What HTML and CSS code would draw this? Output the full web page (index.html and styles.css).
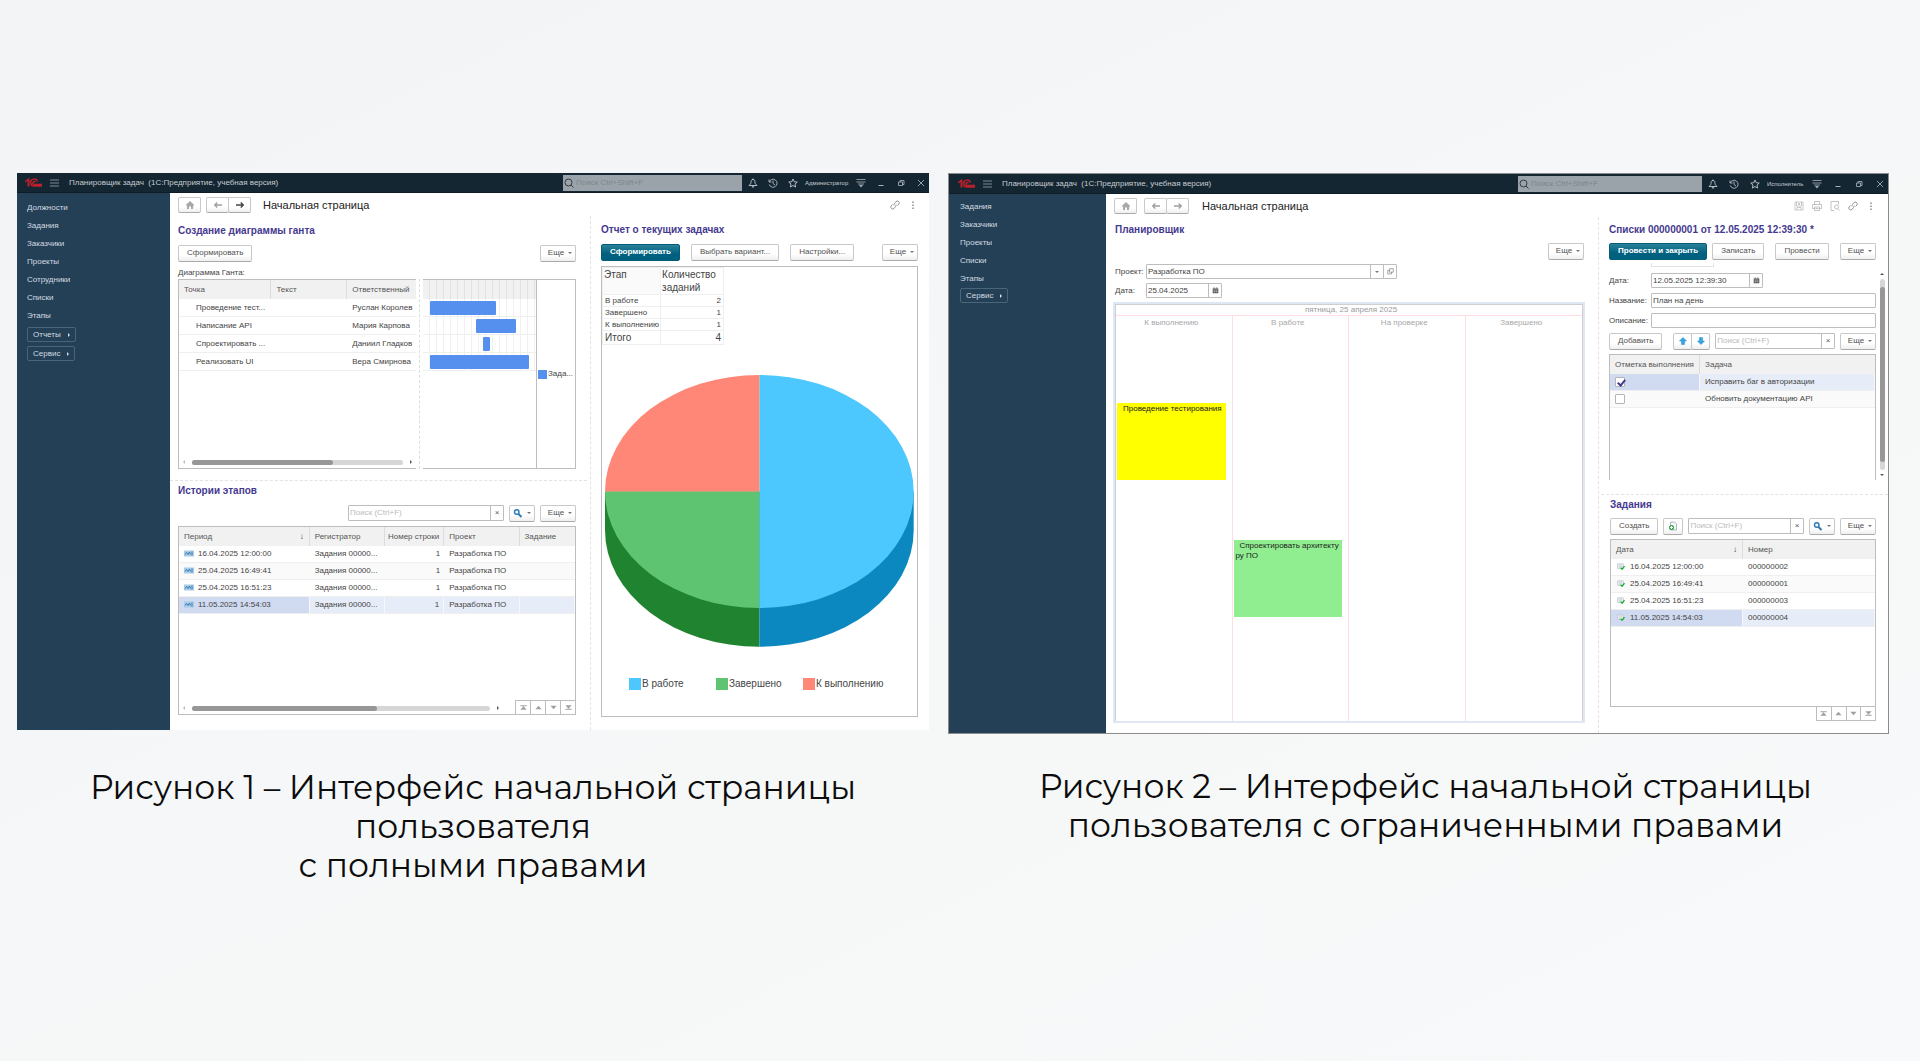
FILE: index.html
```html
<!DOCTYPE html>
<html lang="ru">
<head>
<meta charset="utf-8">
<meta name="viewport" content="width=device-width, initial-scale=1">
<title>Интерфейс начальной страницы</title>
<link rel="stylesheet" href="styles.css">
</head>
<body>
<svg class="sprite" aria-hidden="true">
  <symbol id="logo" viewBox="0 0 34 18"><path d="M0 6l6-5h3v16H5V6L0 9z" fill="#bb202b"/><path d="M25 7a7 7 0 1 0-6 9h15M21 8a3 3 0 1 0-2 5h15" fill="none" stroke="#bb202b" stroke-width="3"/></symbol>
  <symbol id="burger" viewBox="0 0 18 16"><path d="M0 2h18M0 8h18M0 14h18" stroke="#7f8a92" stroke-width="2"/></symbol>
  <symbol id="lens" viewBox="0 0 20 20"><path d="M14 14l5 5M16 9A7 7 0 1 1 2 9a7 7 0 0 1 14 0z" fill="none" stroke="#333c43" stroke-width="2"/></symbol>
  <symbol id="bell" viewBox="0 0 20 20"><path d="M10 1v3M10 3C6 3 6 7 6 9s-1 3-4 6h16c-3-3-4-4-4-6s0-6-4-6zM8 16l2 3 2-3" fill="none" stroke="#c3c9cd" stroke-width="1.800"/></symbol>
  <symbol id="history" viewBox="0 0 20 20"><path d="M2 3v5h5M2.500 8a8 8 0 1 1 0 5M10 5v6l4 3" fill="none" stroke="#b3babf" stroke-width="1.800"/></symbol>
  <symbol id="star" viewBox="0 0 20 20"><path d="M10 2l2.500 5.500 6 .600-4.500 4 1.300 6L10 15l-5.300 3.100 1.300-6-4.500-4 6-.600z" fill="none" stroke="#c3c9cd" stroke-width="1.800"/></symbol>
  <symbol id="service" viewBox="0 0 20 20"><path d="M1 3h18M1 8h18M4 12h12" stroke="#a9b1b7" stroke-width="1.600"/><path d="M6 14h8l-4 5z" fill="#a9b1b7"/></symbol>
  <symbol id="minimize" viewBox="0 0 20 20"><path d="M5 15h10" stroke="#a9b1b7" stroke-width="2"/></symbol>
  <symbol id="restore" viewBox="0 0 20 20"><path d="M5 8h8v7H5zM8 8V5h8v8h-3" fill="none" stroke="#b3babf" stroke-width="1.600"/></symbol>
  <symbol id="close" viewBox="0 0 20 20"><path d="M4 4l12 12M16 4L4 16" stroke="#b3babf" stroke-width="1.600"/></symbol>
  <symbol id="home" viewBox="0 0 20 20"><path d="M10 2l8.500 8-2 1.500L16 18h-4v-5H8v5H4v-6.500L1.500 10z" fill="#a8a8a8"/></symbol>
  <symbol id="left" viewBox="0 0 20 20"><path d="M18 10H4M8.500 5l-5 5 5 5" fill="none" stroke="currentColor" stroke-width="2.800"/></symbol>
  <symbol id="right" viewBox="0 0 20 20"><path d="M2 10h14M11.500 5l5 5-5 5" fill="none" stroke="currentColor" stroke-width="2.800"/></symbol>
  <symbol id="link" viewBox="0 0 20 20"><path d="M8 11a4 4 0 0 1 1-4l3-4a4 4 0 0 1 6 5l-3 3M12 9a4 4 0 0 1-1 4l-3 4a4 4 0 0 1-6-5l3-3" fill="none" stroke="#777" stroke-width="1.600"/></symbol>
  <symbol id="dots" viewBox="0 0 20 20"><path d="M9 3h2v3H9zM9 9h2v3H9zM9 15h2v3H9z" fill="#555"/></symbol>
  <symbol id="save" viewBox="0 0 20 20"><path d="M2 2h16v16H2zM5 2v8h10V2M6 18v-5h8v5M8 5h4M8 7h4" fill="none" stroke="#b4b4b4" stroke-width="1.400"/></symbol>
  <symbol id="print" viewBox="0 0 20 20"><path d="M5 7V1h10v6M5 15H1V7h18v8h-4M5 12h10v7H5zM7 15h6" fill="none" stroke="#b4b4b4" stroke-width="1.600"/></symbol>
  <symbol id="preview" viewBox="0 0 20 20"><path d="M8 19H2V1h15v6M17 12a4 4 0 1 1-8 0 4 4 0 0 1 8 0zM15 15l4 4" fill="none" stroke="#b4b4b4" stroke-width="1.600"/></symbol>
  <symbol id="find" viewBox="0 0 20 20"><path d="M12 8A4.500 4.500 0 1 1 3 8a4.500 4.500 0 0 1 9 0z" fill="none" stroke="#2a7ab5" stroke-width="2.800"/><path d="M11 12l6 6" stroke="#2a7ab5" stroke-width="4"/></symbol>
  <symbol id="record" viewBox="0 0 20 14"><path d="M0 1h20v12H0z" fill="#a9cbe6"/><path d="M2 9l3-4 3 4 3-5 2 5M16 3v8" fill="none" stroke="#2d76ad" stroke-width="1.800"/></symbol>
  <symbol id="posted" viewBox="0 0 20 18"><path d="M1 2h15v12H1zM4 5h9M4 8h9M4 11h5" fill="#f3f6f8" stroke="#a9b5be" stroke-width="1.400"/><path d="M9 12l4 4 6-8" fill="none" stroke="#21ad35" stroke-width="3.500"/></symbol>
  <symbol id="copy" viewBox="0 0 20 20"><path d="M5 2h8l4 4v12H5z" fill="#f5f8fa" stroke="#8fa3b3" stroke-width="1.500"/><path d="M12 13a5 5 0 1 1-10 0 5 5 0 0 1 10 0z" fill="#2fa541"/><path d="M4 13h6M7 10v6" stroke="#fff" stroke-width="2"/></symbol>
  <symbol id="calendar" viewBox="0 0 20 20"><path d="M2 4h16v14H2zM5 1h2v3H5zM13 1h2v3h-2z" fill="#555"/><path d="M3 8.500h14M3 12.500h14M7 7v10M12.500 7v10" stroke="#ddd"/></symbol>
  <symbol id="open" viewBox="0 0 20 20"><path d="M7 2h11v10H7zM7 7H2v10h11v-5" fill="none" stroke="#777" stroke-width="1.800"/></symbol>
  <symbol id="up" viewBox="0 0 20 20"><path d="M10 1l9 9h-5v9H6v-9H1z" fill="#35a5e5" stroke="#1c7cb8"/></symbol>
  <symbol id="down" viewBox="0 0 20 20"><path d="M10 19l9-9h-5V1H6v9H1z" fill="#35a5e5" stroke="#1c7cb8"/></symbol>
  <symbol id="first" viewBox="0 0 20 20"><path d="M3 5h14v2H3zM3 15l7-8 7 8z" fill="#a0a0a0"/></symbol>
  <symbol id="prev" viewBox="0 0 20 20"><path d="M3 14l7-8 7 8z" fill="#a0a0a0"/></symbol>
  <symbol id="next" viewBox="0 0 20 20"><path d="M3 6l7 8 7-8z" fill="#a0a0a0"/></symbol>
  <symbol id="last" viewBox="0 0 20 20"><path d="M3 13h14v2H3zM3 5l7 8 7-8z" fill="#a0a0a0"/></symbol>
</svg>

<main class="slide">
  <figure class="shot">
    <div class="app">
      <header class="titlebar">
        <svg class="logo"><use href="#logo"/></svg>
        <svg class="burger"><use href="#burger"/></svg>
        <span class="app-name">Планировщик задач&nbsp; (1С:Предприятие, учебная версия)</span>
        <label class="global-search"><svg class="icon"><use href="#lens"/></svg><input type="search" placeholder="Поиск Ctrl+Shift+F" aria-label="Поиск"></label>
        <div class="system">
          <svg class="icon"><use href="#bell"/></svg><svg class="icon"><use href="#history"/></svg><svg class="icon"><use href="#star"/></svg>
          <span class="user">Администратор</span>
          <svg class="icon"><use href="#service"/></svg><svg class="icon"><use href="#minimize"/></svg><svg class="icon"><use href="#restore"/></svg><svg class="icon"><use href="#close"/></svg>
        </div>
      </header>
      <div class="app-body">
        <nav class="sidebar">
          <a href="#">Должности</a><a href="#">Задания</a><a href="#">Заказчики</a><a href="#">Проекты</a><a href="#">Сотрудники</a><a href="#">Списки</a><a href="#">Этапы</a>
          <button class="group">Отчеты</button><button class="group">Сервис</button>
        </nav>
        <section class="workspace">
          <div class="page-bar">
            <button class="btn home" aria-label="Домой"><svg class="icon"><use href="#home"/></svg></button>
            <div class="history"><button class="btn" aria-label="Назад"><svg class="icon"><use href="#left"/></svg></button><button class="btn active" aria-label="Вперед"><svg class="icon"><use href="#right"/></svg></button></div>
            <h1>Начальная страница</h1>
            <div class="page-tools"><svg class="icon"><use href="#link"/></svg><svg class="icon"><use href="#dots"/></svg></div>
          </div>
          <div class="panes">
            <div class="pane-main split">
              <section class="gantt-section">
                <h2>Создание диаграммы ганта</h2>
                <div class="toolbar"><button class="btn">Сформировать</button><button class="btn more">Еще</button></div>
                <p class="caption-label">Диаграмма Ганта:</p>
                <div class="gantt">
                  <div class="gantt-list">
                    <table class="grid">
                      <colgroup><col class="w-39"><col class="w-32"><col></colgroup>
                      <thead><tr><th>Точка</th><th>Текст</th><th>Ответственный</th></tr></thead>
                      <tbody>
                        <tr><td class="indent">Проведение тест...</td><td></td><td>Руслан Королев</td></tr>
                        <tr><td class="indent">Написание API</td><td></td><td>Мария Карпова</td></tr>
                        <tr><td class="indent">Спроектировать ...</td><td></td><td>Даниил Гладков</td></tr>
                        <tr><td class="indent">Реализовать UI</td><td></td><td>Вера Смирнова</td></tr>
                      </tbody>
                    </table>
                    <div class="scroll"><div class="track"><div class="thumb" style="width:67%"></div></div></div>
                  </div>
                  <div class="gantt-divider"></div>
                  <div class="gantt-chart">
                    <div class="timeline">
                      <div class="scale"></div>
                      <div class="lane"><div class="bar" style="margin-left:6%;width:59%"></div></div>
                      <div class="lane"><div class="bar" style="margin-left:47%;width:35%"></div></div>
                      <div class="lane"><div class="bar" style="margin-left:53%;width:6%"></div></div>
                      <div class="lane"><div class="bar" style="margin-left:6%;width:88%"></div></div>
                    </div>
                    <div class="gantt-legend"><i class="swatch gantt-blue"></i>Зада...</div>
                  </div>
                </div>
              </section>
              <section class="stages">
                <h2>Истории этапов</h2>
                <div class="toolbar end">
                  <div class="search"><input type="search" placeholder="Поиск (Ctrl+F)" aria-label="Поиск"><button aria-label="Очистить">×</button></div>
                  <button class="btn find" aria-label="Найти"><svg class="icon"><use href="#find"/></svg></button>
                  <button class="btn more">Еще</button>
                </div>
                <div class="list history-list">
                  <table class="grid dense">
                    <colgroup><col class="w-33"><col class="w-19"><col class="w-15"><col class="w-19"><col></colgroup>
                    <thead><tr><th class="sorted">Период</th><th>Регистратор</th><th class="num">Номер строки</th><th>Проект</th><th>Задание</th></tr></thead>
                    <tbody>
                      <tr><td><svg class="icon row-icon"><use href="#record"/></svg>16.04.2025 12:00:00</td><td>Задания 00000...</td><td class="num">1</td><td>Разработка ПО</td><td></td></tr>
                      <tr><td><svg class="icon row-icon"><use href="#record"/></svg>25.04.2025 16:49:41</td><td>Задания 00000...</td><td class="num">1</td><td>Разработка ПО</td><td></td></tr>
                      <tr><td><svg class="icon row-icon"><use href="#record"/></svg>25.04.2025 16:51:23</td><td>Задания 00000...</td><td class="num">1</td><td>Разработка ПО</td><td></td></tr>
                      <tr class="selected"><td><svg class="icon row-icon"><use href="#record"/></svg>11.05.2025 14:54:03</td><td>Задания 00000...</td><td class="num">1</td><td>Разработка ПО</td><td></td></tr>
                    </tbody>
                  </table>
                  <div class="list-foot">
                    <div class="scroll"><div class="track"><div class="thumb" style="width:62%"></div></div></div>
                    <div class="pager"><button aria-label="В начало"><svg class="icon"><use href="#first"/></svg></button><button aria-label="Вверх"><svg class="icon"><use href="#prev"/></svg></button><button aria-label="Вниз"><svg class="icon"><use href="#next"/></svg></button><button aria-label="В конец"><svg class="icon"><use href="#last"/></svg></button></div>
                  </div>
                </div>
              </section>
            </div>
            <section class="pane-side report">
              <h2>Отчет о текущих задачах</h2>
              <div class="toolbar loose"><button class="btn primary">Сформировать</button><button class="btn">Выбрать вариант...</button><button class="btn">Настройки...</button><button class="btn more">Еще</button></div>
              <div class="report-box">
                <table class="summary">
                  <thead><tr><th>Этап</th><th>Количество заданий</th></tr></thead>
                  <tbody><tr><td>В работе</td><td>2</td></tr><tr><td>Завершено</td><td>1</td></tr><tr><td>К выполнению</td><td>1</td></tr></tbody>
                  <tfoot><tr><td>Итого</td><td>4</td></tr></tfoot>
                </table>
                <svg class="pie" viewBox="0 0 310 274" role="img" aria-label="Количество заданий по этапам">
                  <path d="M0 117v39a155 117 0 0 0 155 117V117z" fill="#20832f"/>
                  <path d="M310 117v39a155 117 0 0 1-155 117V117z" fill="#0c88c0"/>
                  <path d="M155 117V0a155 117 0 0 1 0 234z" fill="#4dc8ff"/>
                  <path d="M155 117v117A155 117 0 0 1 0 117z" fill="#5fc471"/>
                  <path d="M155 117H0A155 117 0 0 1 155 0z" fill="#ff8778"/>
                </svg>
                <ul class="legend"><li><i class="swatch pie-blue"></i>В работе</li><li><i class="swatch pie-green"></i>Завершено</li><li><i class="swatch pie-red"></i>К выполнению</li></ul>
              </div>
            </section>
          </div>
        </section>
      </div>
    </div>
    <figcaption>Рисунок 1 – Интерфейс начальной страницы<br>пользователя<br>с полными правами</figcaption>
  </figure>

  <figure class="shot limited">
    <div class="app framed">
      <header class="titlebar">
        <svg class="logo"><use href="#logo"/></svg>
        <svg class="burger"><use href="#burger"/></svg>
        <span class="app-name">Планировщик задач&nbsp; (1С:Предприятие, учебная версия)</span>
        <label class="global-search"><svg class="icon"><use href="#lens"/></svg><input type="search" placeholder="Поиск Ctrl+Shift+F" aria-label="Поиск"></label>
        <div class="system">
          <svg class="icon"><use href="#bell"/></svg><svg class="icon"><use href="#history"/></svg><svg class="icon"><use href="#star"/></svg>
          <span class="user">Исполнитель</span>
          <svg class="icon"><use href="#service"/></svg><svg class="icon"><use href="#minimize"/></svg><svg class="icon"><use href="#restore"/></svg><svg class="icon"><use href="#close"/></svg>
        </div>
      </header>
      <div class="app-body">
        <nav class="sidebar">
          <a href="#">Задания</a><a href="#">Заказчики</a><a href="#">Проекты</a><a href="#">Списки</a><a href="#">Этапы</a>
          <button class="group">Сервис</button>
        </nav>
        <section class="workspace">
          <div class="page-bar">
            <button class="btn home" aria-label="Домой"><svg class="icon"><use href="#home"/></svg></button>
            <div class="history"><button class="btn" aria-label="Назад"><svg class="icon"><use href="#left"/></svg></button><button class="btn" aria-label="Вперед"><svg class="icon"><use href="#right"/></svg></button></div>
            <h1>Начальная страница</h1>
            <div class="page-tools"><svg class="icon"><use href="#save"/></svg><svg class="icon"><use href="#print"/></svg><svg class="icon"><use href="#preview"/></svg><svg class="icon"><use href="#link"/></svg><svg class="icon"><use href="#dots"/></svg></div>
          </div>
          <div class="panes">
            <section class="pane-main planner">
              <h2>Планировщик</h2>
              <div class="toolbar"><button class="btn more">Еще</button></div>
              <div class="form">
                <label for="project">Проект:</label>
                <div class="field project"><input id="project" value="Разработка ПО"><button aria-label="Выбрать"><i class="caret"></i></button><button aria-label="Открыть"><svg class="icon"><use href="#open"/></svg></button></div>
                <label for="day">Дата:</label>
                <div class="field day"><input id="day" value="25.04.2025"><button aria-label="Календарь"><svg class="icon"><use href="#calendar"/></svg></button></div>
              </div>
              <div class="board">
                <div class="board-inner">
                  <div class="board-date">пятница, 25 апреля 2025</div>
                  <div class="board-columns">
                    <div class="stage"><h3>К выполнению</h3><div class="event yellow">Проведение тестирования</div></div>
                    <div class="stage"><h3>В работе</h3><div class="event green">Спроектировать архитекту<br>ру ПО</div></div>
                    <div class="stage"><h3>На проверке</h3></div>
                    <div class="stage"><h3>Завершено</h3></div>
                  </div>
                </div>
              </div>
            </section>
            <div class="pane-side split">
              <section class="document">
                <h2>Списки 000000001 от 12.05.2025 12:39:30 *</h2>
                <div class="toolbar"><button class="btn primary">Провести и закрыть</button><button class="btn">Записать</button><button class="btn">Провести</button><button class="btn more">Еще</button></div>
                <div class="cut-field"></div>
                <div class="doc-scroll">
                  <div class="doc-body">
                    <div class="form">
                      <label for="when">Дата:</label>
                      <div class="field when"><input id="when" value="12.05.2025 12:39:30"><button aria-label="Календарь"><svg class="icon"><use href="#calendar"/></svg></button></div>
                      <label for="name">Название:</label>
                      <div class="field"><input id="name" value="План на день"></div>
                      <label for="about">Описание:</label>
                      <div class="field"><input id="about"></div>
                    </div>
                    <div class="toolbar">
                      <button class="btn">Добавить</button>
                      <div class="history move"><button class="btn" aria-label="Выше"><svg class="icon"><use href="#up"/></svg></button><button class="btn" aria-label="Ниже"><svg class="icon"><use href="#down"/></svg></button></div>
                      <div class="search"><input type="search" placeholder="Поиск (Ctrl+F)" aria-label="Поиск"><button aria-label="Очистить">×</button></div>
                      <button class="btn more">Еще</button>
                    </div>
                    <div class="list task-list">
                      <table class="grid dense">
                        <colgroup><col class="w-34"><col></colgroup>
                        <thead><tr><th>Отметка выполнения</th><th>Задача</th></tr></thead>
                        <tbody>
                          <tr class="selected"><td><input type="checkbox" checked aria-label="Выполнено"></td><td>Исправить баг в авторизации</td></tr>
                          <tr><td><input type="checkbox" aria-label="Выполнено"></td><td>Обновить документацию API</td></tr>
                        </tbody>
                      </table>
                    </div>
                  </div>
                  <div class="vscroll"><div class="track"><div class="thumb"></div></div></div>
                </div>
              </section>
              <section class="tasks">
                <h2>Задания</h2>
                <div class="toolbar">
                  <button class="btn">Создать</button>
                  <button class="btn square" aria-label="Скопировать"><svg class="icon"><use href="#copy"/></svg></button>
                  <div class="search"><input type="search" placeholder="Поиск (Ctrl+F)" aria-label="Поиск"><button aria-label="Очистить">×</button></div>
                  <button class="btn find" aria-label="Найти"><svg class="icon"><use href="#find"/></svg></button>
                  <button class="btn more">Еще</button>
                </div>
                <div class="list order-list">
                  <table class="grid dense">
                    <colgroup><col class="w-50"><col></colgroup>
                    <thead><tr><th class="sorted">Дата</th><th>Номер</th></tr></thead>
                    <tbody>
                      <tr><td><svg class="icon row-icon"><use href="#posted"/></svg>16.04.2025 12:00:00</td><td>000000002</td></tr>
                      <tr><td><svg class="icon row-icon"><use href="#posted"/></svg>25.04.2025 16:49:41</td><td>000000001</td></tr>
                      <tr><td><svg class="icon row-icon"><use href="#posted"/></svg>25.04.2025 16:51:23</td><td>000000003</td></tr>
                      <tr class="selected"><td><svg class="icon row-icon"><use href="#posted"/></svg>11.05.2025 14:54:03</td><td>000000004</td></tr>
                    </tbody>
                  </table>
                </div>
                <div class="pager outside"><button aria-label="В начало"><svg class="icon"><use href="#first"/></svg></button><button aria-label="Вверх"><svg class="icon"><use href="#prev"/></svg></button><button aria-label="Вниз"><svg class="icon"><use href="#next"/></svg></button><button aria-label="В конец"><svg class="icon"><use href="#last"/></svg></button></div>
              </section>
            </div>
          </div>
        </section>
      </div>
    </div>
    <figcaption>Рисунок 2 – Интерфейс начальной страницы<br>пользователя с ограниченными правами</figcaption>
  </figure>
</main>
</body>
</html>
```
FILE: styles.css
```css
* { box-sizing: border-box; }
body {
  margin: 0;
  min-height: 100vh;
  background: linear-gradient(155deg, #f2f4f5 0%, #f5f6f8 35%, #f6f8f8 60%, #f8f9fa 100%);
  font-family: "Liberation Sans", Arial, sans-serif;
  font-size: 8px;
  line-height: 10px;
  color: #444;
}
button, input { font: inherit; color: inherit; margin: 0; }
input { border: 0; outline: 0; background: none; padding: 0; min-width: 0; }
input[type="search"] { appearance: none; }
h1, h2, h3, p, ul, figure { margin: 0; padding: 0; }
.sprite { display: none; }
.icon { width: 10px; height: 10px; flex: none; display: block; }

.slide {
  display: grid;
  grid-template-columns: 912fr 941fr;
  gap: 19px;
  align-items: start;
  padding: 173px 31px 40px 17px;
}
.shot { min-width: 0; }
figcaption {
  margin-top: 38px;
  text-align: center;
  font-family: Montserrat, Inter, sans-serif;
  font-size: 33px;
  line-height: 39px;
  color: #0c0c0c;
  white-space: nowrap;
}
.limited figcaption { margin-top: 33px; padding-left: 14px; }

/* Application window */
.app { display: flex; flex-direction: column; background: #fff; min-height: 557px; }
.framed { border: 1px solid #8c8c8c; min-height: 560px; }
.titlebar {
  display: flex;
  align-items: center;
  height: 20px;
  padding: 0 3px 0 8px;
  background: #152633;
  border-bottom: 1px solid #0f1c26;
  color: #c6ccd0;
}
.limited .titlebar { padding-left: 9px; }
.logo { width: 17px; height: 9px; flex: none; }
.burger { width: 9px; height: 8px; margin: 0 10px 0 8px; flex: none; }
.app-name { flex: 1; white-space: nowrap; }
.global-search {
  display: flex;
  align-items: center;
  width: 179px;
  height: 16px;
  padding-left: 1px;
  gap: 2px;
  background: #9ba3aa;
}
.global-search input { flex: 1; }
.global-search input::placeholder { color: #7d858c; opacity: 1; }
.system { display: flex; align-items: center; gap: 10px; padding-left: 6px; }
.user { width: 44px; margin: 0 -3px; font-size: 6px; white-space: nowrap; }
.limited .user { width: 38px; margin: 0 -4px; }
.limited .global-search { width: 184px; }
.limited .system { gap: 11px; }

.app-body { flex: 1; display: grid; grid-template-columns: 153fr 759fr; }
.limited .app-body { grid-template-columns: 157fr 782fr; }
.sidebar {
  display: flex;
  flex-direction: column;
  align-items: flex-start;
  gap: 4px;
  padding: 8px 10px;
  background: #234057;
}
.limited .sidebar { padding-top: 6px; padding-left: 11px; }
.sidebar a { height: 14px; line-height: 14px; color: #d5dbe0; text-decoration: none; }
.group {
  display: flex;
  align-items: center;
  gap: 7px;
  height: 15px;
  padding: 0 5px;
  border: 1px solid #4a6579;
  border-radius: 2px;
  background: none;
  color: #d5dbe0;
}
.limited .group { margin-top: -2px; }
.group::after { content: ""; border: 2px solid transparent; border-left-color: #d5dbe0; border-right: 0; }

.workspace { display: flex; flex-direction: column; min-width: 0; }
.page-bar { display: flex; align-items: center; height: 23px; padding: 1px 11px 0 8px; }
.limited .page-bar { padding-right: 12px; }
.home { width: 23px; padding: 0; }
.history { display: flex; margin: 0 12px 0 5px; }
.history .btn { width: 23px; padding: 0; color: #a0a0a0; }
.history .btn + .btn { margin-left: -1px; }
.history .active { color: #444; }
.limited .page-bar .history { margin-left: 7px; margin-right: 13px; }
h1 { font-size: 11px; line-height: 14px; font-weight: 400; color: #222; white-space: nowrap; }
.page-tools { display: flex; gap: 8px; margin-left: auto; }

.panes { flex: 1; display: grid; grid-template-columns: 420fr 339fr; }
.limited .panes { grid-template-columns: 492fr 290fr; }
.pane-main { padding: 7px 14px 0 8px; min-width: 0; }
.pane-side { padding: 6px 11px 0 10px; border-left: 1px dashed #e3e3e3; min-width: 0; }
.limited .pane-main { padding: 5px 14px 10px 9px; }
.limited .pane-side { padding: 5px 0 0 10px; }
h2 { font-size: 10px; line-height: 16px; font-weight: 700; color: #45398f; white-space: nowrap; }

.btn {
  display: flex;
  align-items: center;
  justify-content: center;
  height: 17px;
  padding: 0 8px;
  border: 1px solid #c9c9c9;
  border-bottom-color: #aaa;
  border-radius: 2px;
  background: linear-gradient(#fff 60%, #efefef);
  color: #505050;
  white-space: nowrap;
}
.page-bar .btn { height: 16px; }
.primary { border-color: #075b75; background: linear-gradient(#2a8199, #00607f 60%, #00607f); color: #fff; font-weight: 700; }
.more { width: 36px; padding: 0 0 0 4px; gap: 4px; margin-left: auto; }
.more::after, .find::after, .caret { content: ""; border: 2px solid transparent; border-top-color: #777; border-bottom: 0; }
.find { width: 26px; padding: 0; gap: 4px; }
.toolbar { display: flex; align-items: center; margin-top: 5px; height: 18px; }
.toolbar.end { justify-content: flex-end; gap: 5px; }
.end .more { margin-left: 0; }
.loose { gap: 11px; }
.search, .field {
  display: flex;
  height: 16px;
  border: 1px solid #bdbdbd;
  border-radius: 1px;
  background: #fff;
}
.search input, .field input { flex: 1; width: 0; padding: 0 1px; }
.search input::placeholder { color: #bbb; opacity: 1; }
.search button, .field button {
  display: flex;
  align-items: center;
  justify-content: center;
  width: 13px;
  padding: 0;
  border: 0;
  border-left: 1px solid #bdbdbd;
  background: none;
  color: #555;
}
.field .icon { width: 7px; height: 7px; }
.end .search { width: 156px; }

/* Tables */
.grid { width: 100%; table-layout: fixed; border-collapse: separate; border-spacing: 0; }
.w-15 { width: 15%; } .w-19 { width: 19%; } .w-32 { width: 32%; } .w-33 { width: 33%; }
.w-34 { width: 34%; } .w-39 { width: 39%; } .w-50 { width: 50%; }
.grid th {
  height: 19px;
  padding: 0 5px;
  border-right: 1px solid #dcdcdc;
  background: #f1f1f1;
  font-weight: 400;
  text-align: left;
  white-space: nowrap;
  color: #555;
}
.grid th:last-child { border-right: 0; }
.grid td { height: 18px; padding: 0 5px; border-bottom: 1px solid #efefef; white-space: nowrap; }
.grid.dense td { height: 17px; }
.grid .indent { padding-left: 17px; }
.grid .num { text-align: right; padding: 0 4px 0 0; }
.sorted::after { content: "↓"; float: right; color: #333; }
.dense tr:nth-child(even) td { background: #fafafa; }
.dense .selected td, .dense .selected:nth-child(even) td { background: #e7edf8; border-right: 1px solid #f6f8fc; }
.dense .selected td:first-child, .dense .selected:nth-child(even) td:first-child { background: #d0daf1; }
.row-icon { display: inline-block; width: 10px; height: 7px; margin-right: 4px; vertical-align: -1px; }
.list { display: flex; flex-direction: column; border: 1px solid #bdbdbd; }

.scroll { display: flex; align-items: center; justify-content: space-between; padding: 0 4px; height: 12px; flex: 1; gap: 7px; }
.scroll::before, .scroll::after { content: ""; border: 2px solid transparent; }
.scroll::before { border-right-color: #bbb; border-left: 0; }
.scroll::after { border-left-color: #555; border-right: 0; }
.track { flex: 1; height: 5px; border-radius: 3px; background: #d6d6d6; }
.thumb { height: 5px; border-radius: 3px; background: #979797; }
.pager { display: flex; border-top: 1px solid #bdbdbd; }
.pager button { display: flex; align-items: center; justify-content: center; width: 15px; height: 13px; padding: 0; border: 0; border-left: 1px solid #bdbdbd; background: none; }
.pager .icon { width: 9px; height: 9px; }

/* Gantt */
.gantt-section { padding-bottom: 11px; margin: 0 -11px 0 -8px; padding-left: 8px; padding-right: 11px; border-bottom: 1px dashed #e3e3e3; }
.caption-label { margin-top: 5px; line-height: 12px; }
.gantt { display: grid; grid-template-columns: 238fr 7px 153fr; }
.gantt-divider { justify-self: center; border-left: 1px dashed #ddd; }
.gantt-list { display: flex; flex-direction: column; min-height: 190px; border: 1px solid #bdbdbd; border-right: 0; }
.gantt-list .scroll { flex: none; margin-top: auto; }
.gantt-chart { display: grid; grid-template-columns: 114fr 38fr; border: 1px solid #bdbdbd; border-left: 0; }
.timeline { border-right: 1px solid #bdbdbd; }
.scale, .lane { background: repeating-linear-gradient(90deg, transparent 0 6px, #f1f1f1 6px 7px); }
.scale { height: 19px; background: repeating-linear-gradient(90deg, #f1f1f1 0 6px, #e2e2e2 6px 7px); }
.lane { height: 18px; padding-top: 2px; border-bottom: 1px solid #efefef; }
.bar { height: 14px; border-radius: 1px; background: #5590ee; }
.gantt-legend { display: flex; align-items: center; gap: 1px; height: 10px; margin-top: 89px; padding-left: 1px; white-space: nowrap; }
.swatch { width: 12px; height: 12px; flex: none; }
.gantt-blue { width: 9px; height: 9px; background: #5590ee; }
.pie-blue { background: #4dc8ff; }
.pie-green { background: #5fc471; }
.pie-red { background: #ff8778; }

.stages { padding-top: 2px; padding-bottom: 13px; }
.history-list { margin-top: 4px; min-height: 189px; }
.list-foot { display: flex; margin-top: auto; align-items: flex-end; }
.list-foot .pager { margin-left: 12px; }

/* Report */
.report { display: flex; flex-direction: column; padding-bottom: 13px; }
.report-box { flex: 1; margin-top: 5px; border: 1px solid #bdbdbd; }
.summary { width: 122px; table-layout: fixed; border-collapse: collapse; }
.summary th, .summary td { padding: 0 2px; border: 1px solid #efefef; text-align: left; font-weight: 400; white-space: nowrap; }
.summary th { width: 48%; height: 27px; padding: 0 1px; vertical-align: top; font-size: 10px; line-height: 13px; white-space: normal; background: #fafafa; }
.summary th + th { width: 52%; background: #fff; }
.summary td { height: 12px; }
.summary td + td { text-align: right; }
.summary tfoot td { height: 14px; font-size: 10px; }
.pie { display: block; width: 98%; margin: 30px auto 0; }
.legend { display: grid; grid-template-columns: repeat(3, 87px); justify-content: center; margin-top: 30px; list-style: none; font-size: 10px; white-space: nowrap; }
.legend li { display: flex; align-items: center; gap: 1px; }

/* Planner */
.planner { display: flex; flex-direction: column; }
.form { display: grid; grid-template-columns: auto 1fr; column-gap: 4px; row-gap: 4px; align-items: center; }
.planner .toolbar { margin-top: 4px; }
.planner .form { margin-top: 4px; grid-template-columns: 27px 1fr; }
.field { height: 15px; }
.project { width: 251px; }
.day { width: 76px; }
.board { flex: 1; display: flex; margin: 4px -1px 0 -2px; border: 2px solid #dfe6f4; }
.board-inner { flex: 1; display: flex; flex-direction: column; border: 1px solid #cfcfcf; border-bottom: 0; }
.board-date { height: 11px; text-align: center; color: #9b9b9b; border-bottom: 1px solid #ffdde3; padding-left: 4px; }
.board-columns { flex: 1; display: grid; grid-template-columns: repeat(4, 1fr); }
.stage { padding: 0 6px 0 1px; border-right: 1px solid #ffdde3; }
.stage:last-child { border-right: 0; }
.stage h3 { line-height: 13px; font-size: 8px; font-weight: 400; color: #a8a8a8; text-align: center; }
.event { height: 77px; padding: 1px 2px; color: #222; text-indent: 4px; white-space: nowrap; }
.yellow { margin-top: 74px; background: #ff0; }
.green { margin-top: 211px; background: #90ee90; }

/* Document and tasks */
.document { padding-right: 3px; margin-left: -8px; padding-left: 8px; border-bottom: 1px dashed #e3e3e3; padding-bottom: 14px; }
.document > .toolbar { margin-right: 9px; margin-top: 4px; gap: 5px; }
.document > .toolbar .btn:nth-child(3) { margin-left: 6px; }
.cut-field { width: 63px; height: 4px; margin: 3px 0 6px 42px; border: 1px solid #e3e3e3; border-top: 0; }
.doc-scroll { display: flex; gap: 3px; }
.doc-body { flex: 1; min-width: 0; }
.doc-body .form { grid-template-columns: 38px 1fr; row-gap: 5px; }
.when { width: 112px; }
.doc-body .toolbar { margin-top: 4px; }
.doc-body .search { flex: 1; margin-right: 5px; }
.move { margin: 0 5px 0 11px; }
.move .btn { width: 19px; }
.move .icon { width: 8px; height: 8px; }
.task-list { margin-top: 4px; min-height: 126px; border-bottom: 0; }
.task-list input {
  appearance: none;
  display: block;
  width: 10px;
  height: 10px;
  border: 1px solid #b5b5b5;
  border-radius: 1px;
  background: #fff;
}
.task-list input:checked::after {
  content: "";
  display: block;
  width: 3px;
  height: 6px;
  margin-left: 3px;
  border: solid #45398f;
  border-width: 0 2px 2px 0;
  transform: rotate(40deg);
}
.vscroll { display: flex; flex-direction: column; align-items: center; width: 6px; gap: 4px; padding-bottom: 4px; }
.vscroll::before, .vscroll::after { content: ""; border: 2px solid transparent; }
.vscroll::before { border-bottom-color: #555; border-top: 0; }
.vscroll::after { border-top-color: #555; border-bottom: 0; }
.vscroll .track { width: 5px; padding: 8px 0; }
.vscroll .thumb { height: 100%; }
.tasks { padding: 2px 12px 12px 1px; }
.tasks .toolbar { gap: 5px; margin-top: 4px; }
.tasks .toolbar .more { margin-left: 0; }
.square { width: 20px; padding: 0; }
.tasks .search { flex: 1; }
.order-list { margin-top: 4px; min-height: 168px; }
.outside { width: 60px; margin-left: auto; border-top: 0; border-right: 1px solid #bdbdbd; border-bottom: 1px solid #bdbdbd; }
```
